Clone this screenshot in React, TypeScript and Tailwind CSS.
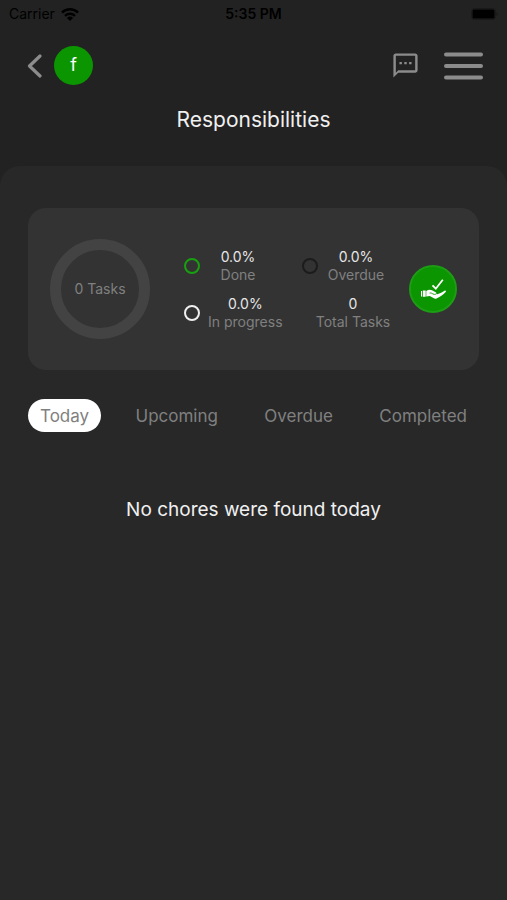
import React from "react";
import { MdOutlineTextsms } from "react-icons/md";

const tabs = ["Today", "Upcoming", "Overdue", "Completed"];

const StatusBar = () => (
  <div className="grid grid-cols-3 items-center h-7 px-[9px] text-sm text-black">
    <div className="flex items-center gap-1.5">
      <span>Carrier</span>
      <svg className="w-[18px] h-[13px]" viewBox="0 0 18 13" fill="none">
        <path d="M1 4.6a11.4 11.4 0 0 1 16 0" stroke="currentColor" strokeWidth="2.6" />
        <path d="M4 7.8a7.2 7.2 0 0 1 10 0" stroke="currentColor" strokeWidth="2.4" />
        <path d="M9 13 5.9 9.9a4.5 4.5 0 0 1 6.2 0z" fill="currentColor" />
      </svg>
    </div>
    <span className="text-center font-semibold">5:35 PM</span>
    <svg className="ml-auto w-[27px] h-3" viewBox="0 0 27 12">
      <rect x="0.5" y="0.5" width="24" height="11" rx="3" fill="none" stroke="#191919" />
      <rect x="1.5" y="1.5" width="22" height="9" rx="1.5" fill="currentColor" />
      <path d="M25.5 4v4c.8-.3 1.3-1.1 1.3-2s-.5-1.7-1.3-2z" fill="#191919" />
    </svg>
  </div>
);

const Header = () => (
  <header className="flex items-center h-[74px] pl-[27px] pr-6">
    <button aria-label="Back" className="text-[#8c8c8c]">
      <svg className="w-4 h-[26px]" viewBox="0 0 16 26" fill="none">
        <path
          d="M13 4 2.5 14 13 24"
          stroke="currentColor"
          strokeWidth="3.2"
          strokeLinecap="round"
          strokeLinejoin="round"
        />
      </svg>
    </button>
    <button className="ml-[11px] size-[39px] rounded-full bg-[#0b9500] text-white text-lg">
      f
    </button>
    <button aria-label="Messages" className="ml-auto text-[#8c8c8c]">
      <MdOutlineTextsms className="size-[29px]" />
    </button>
    <button aria-label="Menu" className="ml-6 text-[#8c8c8c]">
      <svg className="w-[39px] h-[30px]" viewBox="0 0 39 30" fill="none">
        <path
          d="M2 4.5h35M2 16h35M2 27.5h35"
          stroke="currentColor"
          strokeWidth="4"
          strokeLinecap="round"
        />
      </svg>
    </button>
  </header>
);

const Stat = ({ value, label, ring }: { value: string; label: string; ring?: string }) => (
  <div className={ring ? "flex items-center gap-2" : "flex items-center justify-center"}>
    {ring && <span className={`size-4 shrink-0 rounded-full border-2 ${ring}`}></span>}
    <div className="min-w-[60px] text-center whitespace-nowrap">
      <div className="text-[#e6e6e6]">{value}</div>
      <div className="text-[#808080]">{label}</div>
    </div>
  </div>
);

const Summary = () => (
  <section className="flex items-center h-[162px] px-[22px] rounded-[18px] bg-[#333333] text-sm leading-[18px]">
    <div className="flex items-center justify-center size-[100px] shrink-0 rounded-full border-[11px] border-[#434343] text-[#808080] whitespace-nowrap">
      0 Tasks
    </div>
    <div className="ml-[34px] grid grid-cols-[102px_102px] gap-x-4 gap-y-[11px]">
      <Stat value="0.0%" label="Done" ring="border-[#18a010]" />
      <Stat value="0.0%" label="Overdue" ring="border-[#1c1c1c]" />
      <Stat value="0.0%" label="In progress" ring="border-[#f0f0f0]" />
      <Stat value="0" label="Total Tasks" />
    </div>
    <button
      aria-label="Chores"
      className="ml-auto flex items-center justify-center size-12 shrink-0 rounded-full border-2 border-[#1c9d14] bg-[#0b9500] text-white"
    >
      <svg className="w-[25px] h-5" viewBox="0 0 25 20" fill="none">
        <path d="m11.5 6.3 3.3 3.4L21.8.8" stroke="currentColor" strokeWidth="1.8" />
        <path d="M0 12h1v5.500H0zM1.800 11.600h2.900v6.200H1.800z" fill="currentColor" />
        <path
          d="M5.300 12c1.800-1.400 4-1.500 5.700-.7l3.700 1.900c1 .6.900 1.700.1 1.900l1.500.2c2.700-.7 5.200-2.100 7.200-3.500 1-.6 1.900.2 1.200 1.100-2.500 2.900-6 5-9.200 6.500-.9.4-1.800.4-2.600-.1l-4.100-2.200-3.500.3z"
          fill="currentColor"
        />
        <path d="M8.600 14.100c1.500-.4 2.400.3 3.400.9 1 .5 1.900.5 2.900.1" stroke="#0b9500" strokeWidth="0.9" />
      </svg>
    </button>
  </section>
);

const App = () => {
  const [active, setActive] = React.useState("Today");

  return (
    <div className="min-h-screen flex flex-col bg-[#222222] font-['Inter',sans-serif]">
      <StatusBar />
      <Header />
      <h1 className="h-16 pt-0.5 text-center text-[21px] leading-8 text-[#f0f0f0]">
        Responsibilities
      </h1>

      <main className="flex-1 px-7 pt-[42px] rounded-t-[20px] bg-[#282828]">
        <Summary />

        <nav className="mt-[29px] flex justify-between">
          {tabs.map((tab) => (
            <button
              key={tab}
              onClick={() => setActive(tab)}
              className={`h-[33px] px-3 rounded-full text-[17px] leading-6 text-[#808080] ${
                tab === active ? "bg-white" : ""
              }`}
            >
              {tab}
            </button>
          ))}
        </nav>

        <p className="mt-[62px] text-center text-[19px] leading-8 text-[#f0f0f0]">
          No chores were found today
        </p>
      </main>
    </div>
  );
};

export default App;
